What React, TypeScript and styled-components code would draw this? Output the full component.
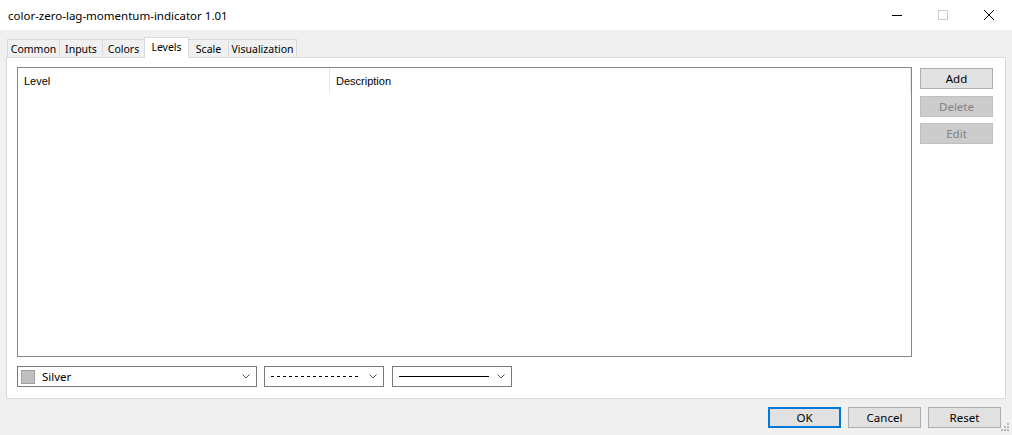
import React from 'react';
import styled, { createGlobalStyle, css } from 'styled-components';

const GlobalStyle = createGlobalStyle`
  * { box-sizing: border-box; }
  html, body { margin: 0; padding: 0; background: #f0f0f0; }
  body { font-family: "Noto Sans", "Open Sans", sans-serif; font-size: 11.5px; color: #000; }
`;

const TABS = [
  { label: 'Common', width: 53 },
  { label: 'Inputs', width: 44 },
  { label: 'Colors', width: 43 },
  { label: 'Levels', width: 45, active: true },
  { label: 'Scale', width: 41 },
  { label: 'Visualization', width: 69 },
];

const Chevron = () => (
  <svg width="8" height="5" viewBox="0 0 8 5">
    <polyline points="0.5,0.5 4,4 7.5,0.5" fill="none" stroke="#5a5a5a" strokeWidth="1" />
  </svg>
);

const ResizeGrip = () => (
  <svg width="12" height="12" viewBox="0 0 12 12">
    {[
      [8, 1], [5, 4], [8, 4], [2, 7], [5, 7], [8, 7],
    ].map(([x, y]) => (
      <rect key={`${x}-${y}`} x={x} y={y} width="2" height="2" fill="#b8b8b8" />
    ))}
  </svg>
);

export default function App() {
  return (
    <Window>
      <GlobalStyle />
      <TitleBar>
        <Title>color-zero-lag-momentum-indicator 1.01</Title>
        <Controls>
          <ControlButton>
            <svg width="10" height="10" viewBox="0 0 10 10">
              <line x1="0" y1="5.5" x2="10" y2="5.5" stroke="#000" strokeWidth="1" />
            </svg>
          </ControlButton>
          <ControlButton>
            <svg width="10" height="10" viewBox="0 0 10 10">
              <rect x="0.5" y="0.5" width="9" height="9" fill="none" stroke="#cccccc" strokeWidth="1" />
            </svg>
          </ControlButton>
          <ControlButton>
            <svg width="10" height="10" viewBox="0 0 10 10">
              <path d="M0 0 L10 10 M10 0 L0 10" stroke="#000" strokeWidth="1" />
            </svg>
          </ControlButton>
        </Controls>
      </TitleBar>

      <Content>
        <TabRow>
          {TABS.map((t) => (
            <Tab key={t.label} $width={t.width} $active={!!t.active}>
              {t.label}
            </Tab>
          ))}
        </TabRow>

        <Panel>
          <MainColumn>
            <ListBox>
              <ListHeader>
                <HeaderCell $width={312}>Level</HeaderCell>
                <HeaderCell $width={581}>Description</HeaderCell>
              </ListHeader>
            </ListBox>

            <ComboRow>
              <Combo $width={240}>
                <ComboValue>
                  <Swatch />
                  <span>Silver</span>
                </ComboValue>
                <Chevron />
              </Combo>
              <Combo $width={120} $gap={7}>
                <ComboValue>
                  <svg width="88" height="3" viewBox="0 0 88 3">
                    <line x1="0" y1="1.5" x2="88" y2="1.5" stroke="#000" strokeWidth="1" strokeDasharray="3 3" />
                  </svg>
                </ComboValue>
                <Chevron />
              </Combo>
              <Combo $width={120} $gap={8}>
                <ComboValue>
                  <svg width="90" height="3" viewBox="0 0 90 3">
                    <line x1="0" y1="1.5" x2="90" y2="1.5" stroke="#000" strokeWidth="1" />
                  </svg>
                </ComboValue>
                <Chevron />
              </Combo>
            </ComboRow>
          </MainColumn>

          <SideButtons>
            <Button $top={1}>Add</Button>
            <Button $top={7} $disabled>Delete</Button>
            <Button $top={6} $disabled>Edit</Button>
          </SideButtons>
        </Panel>

        <DialogButtons>
          <Button $primary>OK</Button>
          <Button>Cancel</Button>
          <Button>Reset</Button>
        </DialogButtons>
      </Content>

      <Grip>
        <ResizeGrip />
      </Grip>
    </Window>
  );
}

const Window = styled.div`
  position: relative;
  width: 1012px;
  height: 435px;
  overflow: hidden;
  display: flex;
  flex-direction: column;
  background: #f0f0f0;
`;

const TitleBar = styled.div`
  height: 30px;
  flex-shrink: 0;
  background: #fff;
  display: flex;
  align-items: center;
  padding-left: 8px;
`;

const Title = styled.div`
  font-size: 11.5px;
  color: #000;
`;

const Controls = styled.div`
  margin-left: auto;
  display: flex;
  height: 100%;
`;

const ControlButton = styled.div`
  width: 46px;
  height: 100%;
  display: flex;
  align-items: center;
  justify-content: center;
`;

const Content = styled.div`
  display: flex;
  flex-direction: column;
  padding: 7px 6px 0 6px;
`;

const TabRow = styled.div`
  display: flex;
  align-items: flex-end;
  height: 20px;
  padding-left: 2px;
`;

const Tab = styled.div<{ $width: number; $active: boolean }>`
  width: ${({ $width }) => $width}px;
  height: 18px;
  margin-left: -1px;
  border: 1px solid #d9d9d9;
  border-bottom: none;
  background: #f0f0f0;
  display: flex;
  align-items: center;
  justify-content: center;
  padding-top: 1px;
  font-size: 10.5px;
  white-space: nowrap;

  ${({ $active }) =>
    $active &&
    css`
      position: relative;
      z-index: 1;
      height: 21px;
      margin-bottom: -1px;
      padding-top: 0;
      padding-bottom: 2px;
      background: #fff;
    `}
`;

const Panel = styled.div`
  width: 1000px;
  height: 342px;
  background: #fff;
  border: 1px solid #d9d9d9;
  padding: 9px 12px 11px 10px;
  display: flex;
  gap: 8px;
`;

const MainColumn = styled.div`
  display: flex;
  flex-direction: column;
  gap: 9px;
`;

const ListBox = styled.div`
  width: 895px;
  height: 290px;
  border: 1px solid #828790;
  background: #fff;
`;

const ListHeader = styled.div`
  display: flex;
  height: 25px;
`;

const HeaderCell = styled.div<{ $width: number }>`
  width: ${({ $width }) => $width}px;
  height: 100%;
  border-right: 1px solid #e5e5e5;
  padding-left: 6px;
  display: flex;
  align-items: center;
  font-family: "Liberation Sans", Arial, sans-serif;
  font-size: 11px;
`;

const ComboRow = styled.div`
  display: flex;
`;

const Combo = styled.div<{ $width: number; $gap?: number }>`
  width: ${({ $width }) => $width}px;
  height: 21px;
  margin-left: ${({ $gap }) => $gap ?? 0}px;
  border: 1px solid #7a7a7a;
  background: #fff;
  display: flex;
  align-items: center;
  padding: 0 6px 0 3px;
`;

const ComboValue = styled.div`
  flex: 1;
  display: flex;
  align-items: center;
  gap: 7px;
  padding-left: 3px;
  min-width: 0;
`;

const Swatch = styled.div`
  width: 14px;
  height: 14px;
  margin-left: -3px;
  background: #c0c0c0;
  border: 1px solid #a0a0a0;
`;

const SideButtons = styled.div`
  display: flex;
  flex-direction: column;
`;

const Button = styled.div<{ $primary?: boolean; $disabled?: boolean; $top?: number }>`
  width: 73px;
  height: 21px;
  margin-top: ${({ $top }) => $top ?? 0}px;
  display: flex;
  align-items: center;
  justify-content: center;
  background: #e1e1e1;
  border: 1px solid #adadad;
  color: #000;
  font-size: 11.5px;

  ${({ $primary }) =>
    $primary &&
    css`
      border: 2px solid #0078d7;
    `}

  ${({ $disabled }) =>
    $disabled &&
    css`
      background: #cccccc;
      border-color: #bfbfbf;
      color: #838383;
    `}
`;

const DialogButtons = styled.div`
  display: flex;
  justify-content: flex-end;
  gap: 7px;
  margin-top: 8px;
  padding-right: 5px;
`;

const Grip = styled.div`
  position: absolute;
  right: 1px;
  bottom: 1px;
  display: flex;
`;
